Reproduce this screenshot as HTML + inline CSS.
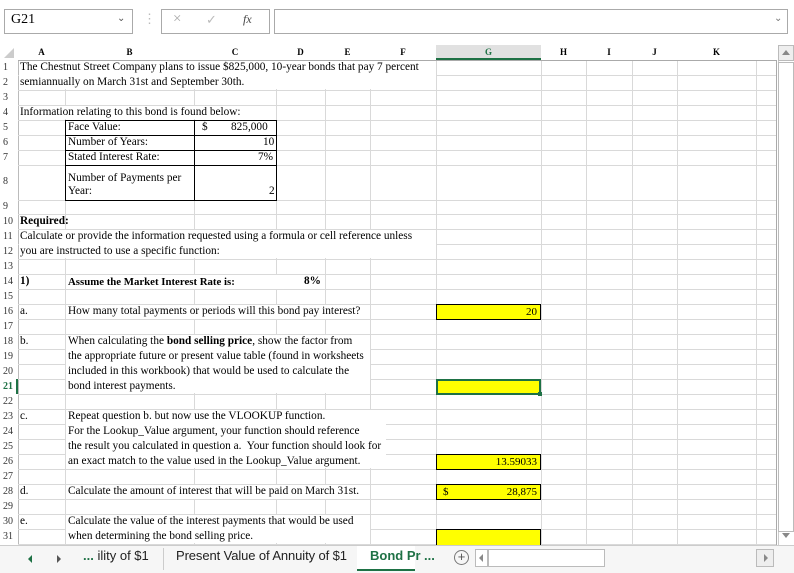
<!DOCTYPE html>
<html><head><meta charset="utf-8"><style>
*{margin:0;padding:0;box-sizing:border-box}
body{width:794px;height:573px;overflow:hidden;background:#fff;font-family:"Liberation Serif",serif;font-size:11px;color:#000;position:relative}
.a{position:absolute;white-space:nowrap}
.vl{position:absolute;width:1px;background:#d9d9d9;top:60px;height:485px}
.hl{position:absolute;height:1px;background:#d9d9d9;left:18px;width:758px}
.rn{position:absolute;left:3px;font-size:10px;color:#333}
.ch{position:absolute;top:47px;font-size:9px;font-weight:bold;text-align:center}
.t{position:absolute;font-size:11.3px;white-space:nowrap}
.y{position:absolute;left:436px;width:105px;height:16px;background:#ffff00;border:1px solid #000;font-size:11px;text-align:right;padding-right:3px;line-height:14px}
.tb{position:absolute;border:1px solid #000}
</style></head><body>
<div class="a" style="left:4px;top:9px;width:129px;height:25px;border:1px solid #aaa"></div>
<div class="a" style="left:11px;top:12px;font-size:14px">G21</div>
<div class="a" style="left:117px;top:13px;font-size:10px;color:#555">&#8964;</div>
<div class="a" style="left:143px;top:11px;font-size:13px;color:#bbb">&#8942;</div>
<div class="a" style="left:161px;top:9px;width:109px;height:25px;border:1px solid #aaa"></div>
<div class="a" style="left:173px;top:11px;font-size:15px;color:#aaa">&#215;</div>
<div class="a" style="left:206px;top:12px;font-size:13px;color:#bbb">&#10003;</div>
<div class="a" style="left:243px;top:12px;font-size:12px;font-style:italic;color:#444">fx</div>
<div class="a" style="left:274px;top:9px;width:514px;height:25px;border:1px solid #aaa"></div>
<div class="a" style="left:774px;top:13px;font-size:10px;color:#777">&#8964;</div>
<div class="a" style="left:4px;top:48px;width:0;height:0;border-left:10px solid transparent;border-bottom:10px solid #ccc"></div>
<div class="a" style="left:436px;top:45px;width:105px;height:15px;background:#e1e1e1;border-bottom:2px solid #1e7145"></div>
<div class="ch" style="left:18px;width:47px">A</div>
<div class="ch" style="left:65px;width:129px">B</div>
<div class="ch" style="left:194px;width:82px">C</div>
<div class="ch" style="left:276px;width:49px">D</div>
<div class="ch" style="left:325px;width:45px">E</div>
<div class="ch" style="left:370px;width:66px">F</div>
<div class="ch" style="left:436px;width:105px;color:#1e7145">G</div>
<div class="ch" style="left:541px;width:45px">H</div>
<div class="ch" style="left:586px;width:46px">I</div>
<div class="ch" style="left:632px;width:45px">J</div>
<div class="ch" style="left:677px;width:79px">K</div>
<div class="vl" style="left:18px;background:#bbb"></div>
<div class="vl" style="left:65px"></div><div class="vl" style="left:194px"></div><div class="vl" style="left:276px"></div><div class="vl" style="left:325px"></div><div class="vl" style="left:370px"></div><div class="vl" style="left:436px"></div><div class="vl" style="left:541px"></div><div class="vl" style="left:586px"></div><div class="vl" style="left:632px"></div><div class="vl" style="left:677px"></div><div class="vl" style="left:756px"></div><div class="vl" style="left:776px;background:#aaa"></div>
<div class="hl" style="top:60px;background:#aaa"></div>
<div class="a" style="left:18px;top:75px;width:758px;height:90px;background:repeating-linear-gradient(#d9d9d9 0 1px,transparent 1px 15px)"></div>
<div class="hl" style="top:165px"></div><div class="hl" style="top:200px"></div><div class="hl" style="top:214px"></div>
<div class="a" style="left:18px;top:229px;width:758px;height:316px;background:repeating-linear-gradient(#d9d9d9 0 1px,transparent 1px 15px)"></div>
<div class="rn" style="top:62px">1</div><div class="rn" style="top:77px">2</div><div class="rn" style="top:92px">3</div><div class="rn" style="top:107px">4</div><div class="rn" style="top:122px">5</div><div class="rn" style="top:137px">6</div><div class="rn" style="top:152px">7</div><div class="rn" style="top:176px">8</div><div class="rn" style="top:201px">9</div>
<div class="rn" style="top:216px">10</div><div class="rn" style="top:231px">11</div><div class="rn" style="top:246px">12</div><div class="rn" style="top:261px">13</div><div class="rn" style="top:276px">14</div><div class="rn" style="top:291px">15</div><div class="rn" style="top:306px">16</div><div class="rn" style="top:321px">17</div><div class="rn" style="top:336px">18</div><div class="rn" style="top:351px">19</div><div class="rn" style="top:366px">20</div><div class="rn" style="top:381px;color:#1e7145;font-weight:bold">21</div><div class="a" style="left:16px;top:379px;width:2px;height:15px;background:#1e7145"></div><div class="rn" style="top:396px">22</div><div class="rn" style="top:411px">23</div><div class="rn" style="top:426px">24</div><div class="rn" style="top:441px">25</div><div class="rn" style="top:456px">26</div><div class="rn" style="top:471px">27</div><div class="rn" style="top:486px">28</div><div class="rn" style="top:501px">29</div><div class="rn" style="top:516px">30</div><div class="rn" style="top:531px">31</div>
<div class="a" style="left:19px;top:61px;width:417px;height:28px;background:#fff"></div>
<div class="a" style="left:19px;top:106px;width:257px;height:13px;background:#fff"></div>
<div class="a" style="left:19px;top:230px;width:417px;height:28px;background:#fff"></div>
<div class="t" style="left:20px;top:61px">The Chestnut Street Company plans to issue $825,000, 10-year bonds that pay 7 percent</div>
<div class="t" style="left:20px;top:76px">semiannually on March 31st and September 30th.</div>
<div class="t" style="left:20px;top:106px">Information relating to this bond is found below:</div>
<div class="tb" style="left:65px;top:120px;width:212px;height:81px"></div>
<div class="a" style="left:194px;top:120px;width:1px;height:81px;background:#000"></div>
<div class="a" style="left:65px;top:135px;width:212px;height:1px;background:#000"></div>
<div class="a" style="left:65px;top:150px;width:212px;height:1px;background:#000"></div>
<div class="a" style="left:65px;top:165px;width:212px;height:1px;background:#000"></div>
<div class="t" style="left:68px;top:121px">Face Value:</div><div class="t" style="left:202px;top:121px">$</div><div class="t" style="left:231px;top:121px">825,000</div>
<div class="t" style="left:68px;top:136px">Number of Years:</div><div class="t" style="left:263px;top:136px">10</div>
<div class="t" style="left:68px;top:151px">Stated Interest Rate:</div><div class="t" style="left:258px;top:151px">7%</div>
<div class="t" style="left:68px;top:172px">Number of Payments per</div><div class="t" style="left:68px;top:185px">Year:</div><div class="t" style="left:269px;top:185px">2</div>
<div class="t" style="left:20px;top:215px;font-weight:bold">Required:</div>
<div class="t" style="left:20px;top:230px">Calculate or provide the information requested using a formula or cell reference unless</div>
<div class="t" style="left:20px;top:245px">you are instructed to use a specific function:</div>
<div class="t" style="left:20px;top:275px;font-weight:bold">1)</div>
<div class="a" style="left:66px;top:275px;width:258px;height:14px;background:#fff"></div>
<div class="t" style="left:68px;top:276px;font-weight:bold;font-size:10.8px">Assume the Market Interest Rate is:</div>
<div class="t" style="left:304px;top:275px;font-weight:bold">8%</div>
<div class="t" style="left:20px;top:305px">a.</div>
<div class="a" style="left:66px;top:305px;width:304px;height:14px;background:#fff"></div>
<div class="t" style="left:68px;top:305px">How many total payments or periods will this bond pay interest?</div>
<div class="y" style="top:304px">20</div>
<div class="t" style="left:20px;top:335px">b.</div>
<div class="a" style="left:66px;top:335px;width:304px;height:58px;background:#fff"></div>
<div class="t" style="left:68px;top:335px">When calculating the <b>bond selling price</b>, show the factor from</div>
<div class="t" style="left:68px;top:350px">the appropriate future or present value table (found in worksheets</div>
<div class="t" style="left:68px;top:365px">included in this workbook) that would be used to calculate the</div>
<div class="t" style="left:68px;top:380px">bond interest payments.</div>
<div class="y" style="top:379px;border:2px solid #1e7145"></div>
<div class="a" style="left:538px;top:392px;width:4px;height:4px;background:#1e7145"></div>
<div class="t" style="left:20px;top:410px">c.</div>
<div class="a" style="left:66px;top:410px;width:320px;height:58px;background:#fff"></div>
<div class="t" style="left:68px;top:410px">Repeat question b. but now use the VLOOKUP function.</div>
<div class="t" style="left:68px;top:425px">For the Lookup_Value argument, your function should reference</div>
<div class="t" style="left:68px;top:440px">the result you calculated in question a.&nbsp; Your function should look for</div>
<div class="t" style="left:68px;top:455px">an exact match to the value used in the Lookup_Value argument.</div>
<div class="y" style="top:454px">13.59033</div>
<div class="t" style="left:20px;top:485px">d.</div>
<div class="a" style="left:66px;top:485px;width:304px;height:14px;background:#fff"></div>
<div class="t" style="left:68px;top:485px">Calculate the amount of interest that will be paid on March 31st.</div>
<div class="y" style="top:484px"><span style="position:absolute;left:6px">$</span>28,875</div>
<div class="t" style="left:20px;top:515px">e.</div>
<div class="a" style="left:66px;top:515px;width:304px;height:28px;background:#fff"></div>
<div class="t" style="left:68px;top:515px">Calculate the value of the interest payments that would be used</div>
<div class="t" style="left:68px;top:530px">when determining the bond selling price.</div>
<div class="y" style="top:529px;height:17px"></div>
<div class="a" style="left:778px;top:45px;width:16px;height:500px;background:#fff;border-left:1px solid #ccc"></div>
<div class="a" style="left:778px;top:45px;width:16px;height:16px;background:#eee;border:1px solid #bbb"></div>
<div class="a" style="left:782px;top:50px;border-left:4px solid transparent;border-right:4px solid transparent;border-bottom:5px solid #888"></div>
<div class="a" style="left:778px;top:62px;width:16px;height:470px;border:1px solid #bbb"></div>
<div class="a" style="left:782px;top:533px;border-left:4px solid transparent;border-right:4px solid transparent;border-top:5px solid #888"></div>
<div class="a" style="left:0;top:545px;width:794px;height:28px;background:#f6f6f6;border-top:1px solid #ccc"></div>
<div class="a" style="left:28px;top:555px;border-top:4px solid transparent;border-bottom:4px solid transparent;border-right:4px solid #1e7145"></div>
<div class="a" style="left:57px;top:555px;border-top:4px solid transparent;border-bottom:4px solid transparent;border-left:4px solid #555"></div>
<div class="a" style="left:83px;top:548px;font-family:'Liberation Sans',sans-serif;font-size:13px;color:#222"><b style="color:#1e7145">...</b> ility of $1</div>
<div class="a" style="left:163px;top:548px;width:1px;height:22px;background:#ccc"></div>
<div class="a" style="left:176px;top:548px;font-family:'Liberation Sans',sans-serif;font-size:13px;color:#222;letter-spacing:-0.1px">Present Value of Annuity of $1</div>
<div class="a" style="left:357px;top:546px;width:58px;height:25px;background:#fff;border-bottom:2px solid #1e7145"></div>
<div class="a" style="left:370px;top:548px;font-family:'Liberation Sans',sans-serif;font-size:13px;font-weight:bold;color:#1e7145">Bond Pr</div>
<div class="a" style="left:424px;top:548px;font-family:'Liberation Sans',sans-serif;font-size:13px;font-weight:bold;color:#1e7145">...</div>
<div class="a" style="left:454px;top:550px;width:15px;height:15px;border:1px solid #777;border-radius:50%;text-align:center;line-height:12px;font-size:13px;color:#555;font-family:'Liberation Sans',sans-serif">+</div>
<div class="a" style="left:475px;top:549px;width:13px;height:18px;background:#fff;border:1px solid #bbb"></div>
<div class="a" style="left:479px;top:554px;border-top:4px solid transparent;border-bottom:4px solid transparent;border-right:4px solid #888"></div>
<div class="a" style="left:488px;top:549px;width:117px;height:18px;background:#fff;border:1px solid #bbb"></div>
<div class="a" style="left:756px;top:549px;width:18px;height:18px;background:#eee;border:1px solid #bbb"></div>
<div class="a" style="left:764px;top:554px;border-top:4px solid transparent;border-bottom:4px solid transparent;border-left:4px solid #888"></div>
</body></html>
